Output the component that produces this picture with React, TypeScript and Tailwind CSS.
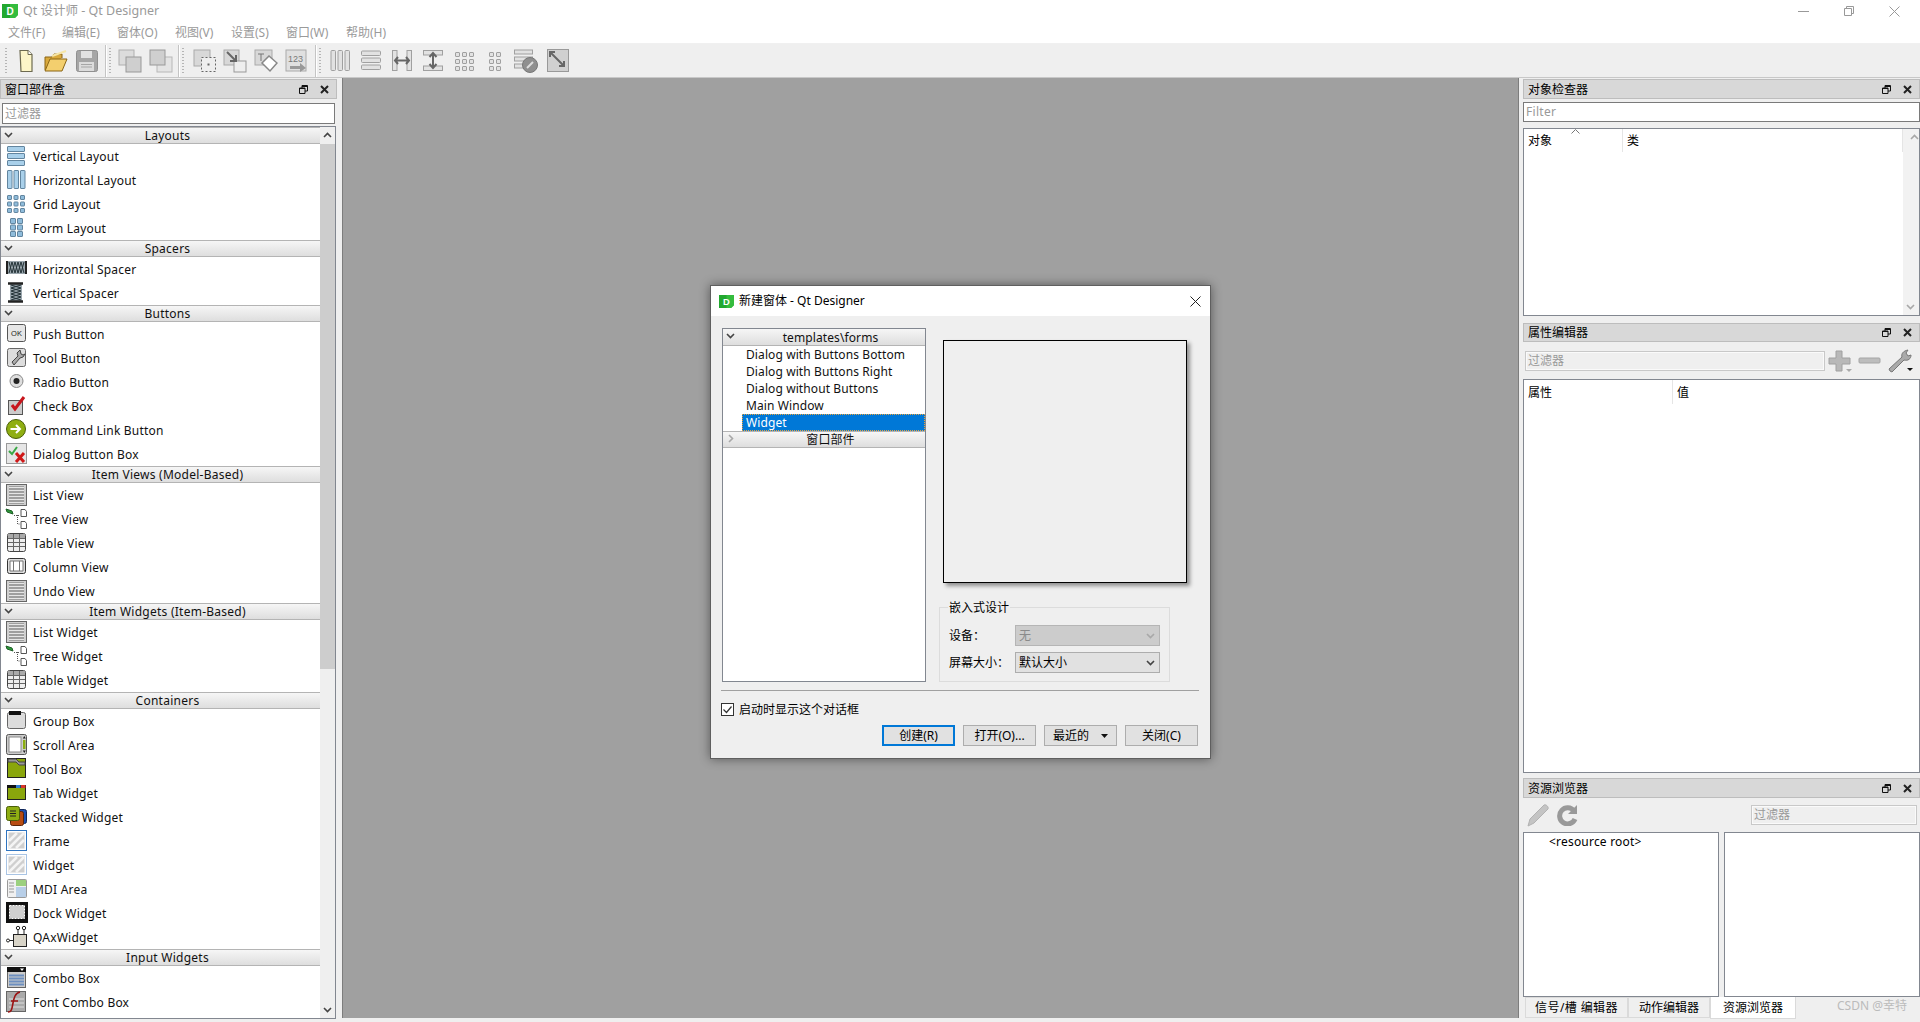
import type { ReactNode } from "react";

const Chevron = ({ open = true, light = false }: { open?: boolean; light?: boolean }) => (
    <svg width="9" height="9" viewBox="0 0 9 9" fill="none" stroke={light ? "#a8a8a8" : "#444"} strokeWidth="1.6">
        <path d={open ? "M1 3l3.5 3.5L8 3" : "M3 1l3.5 3.5L3 8"} />
    </svg>
);

const Box = ({ x, y, w, h, f = "#ddd", s = "#777", r = 0.5 }: { x: number; y: number; w: number; h: number; f?: string; s?: string; r?: number }) => (
    <rect x={x + 0.5} y={y + 0.5} width={w} height={h} rx={r} fill={f} stroke={s} />
);

const squares = (cols: number[], rows: number[], f: string, s: string, size = 4) =>
    cols.flatMap((x) => rows.map((y) => <Box key={`${x}-${y}`} x={x} y={y} w={size} h={size} f={f} s={s} />));

const listLines = (
    <>
        <rect x="1.500" y="1.500" width="20" height="21" fill="#cfcfcf" stroke="#666" />
        <rect x="4" y="3" width="15" height="18" fill="#9f9f9f" />
        {[4, 7, 10, 13, 16, 19].map((y) => <path key={y} d={`M4 ${y + 0.5}h15`} stroke="#e6e6e6" />)}
    </>
);

const treeIcon = (
    <>
        <path d="M1 2l6 2 1 3-6-2z" fill="#2f9a3b" stroke="#1f5f28" />
        <path d="M9 8.500h6M12.500 8v9h3" stroke="#555" strokeDasharray="1 1" fill="none" />
        <path d="M16 2.500h4l1.500 2v5h-5.500zM16 14.500h4l1.500 2v5h-5.500z" fill="#fff" stroke="#555" />
    </>
);

const tableIcon = (
    <>
        <rect x="2.500" y="2.500" width="18" height="18" rx="2" fill="#eee" stroke="#444" />
        <rect x="3" y="3" width="17" height="4" fill="#aaa" />
        <path d="M3 7.500h17M3 11.500h17M3 15.500h17M8.500 3v17M14.500 3v17" stroke="#666" />
    </>
);

const hatch = (border: string) => (
    <>
        <rect x="1.500" y="1.500" width="20" height="20" fill="#fff" stroke={border} />
        <rect x="3.500" y="3.500" width="16" height="16" fill="#cfcfcf" />
        <path d="M4 12l8-8M4 19l15-15M11 19l8-8" stroke="#f4f4f4" strokeWidth="2.500" />
    </>
);

const widgetIcons: Record<string, ReactNode> = {
    "Vertical Layout": [2, 9, 16].map((y) => <Box key={y} x={2} y={y} w={17} h={5} f="#a9d0ea" s="#62859f" />),
    "Horizontal Layout": [2, 8.5, 15].map((x) => <Box key={x} x={x} y={2} w={4.500} h={18} f="#a9d0ea" s="#62859f" />),
    "Grid Layout": squares([2, 8.500, 15], [3, 9.500, 16], "#8fbcdb", "#62859f"),
    "Form Layout": squares([5, 12], [2, 8.500, 15], "#8fbcdb", "#62859f", 5),
    "Horizontal Spacer": (
        <>
            <rect x="2" y="4" width="19" height="13" fill="#9aa6ad" />
            <path d="M2 4v13M21 4v13" stroke="#222" strokeWidth="2" />
            <path d="M4 16l3-11 3 11 3-11 3 11 3-11M4 5l3 11 3-11 3 11 3-11 3 11" stroke="#243338" fill="none" />
        </>
    ),
    "Vertical Spacer": (
        <>
            <rect x="5" y="2" width="12" height="19" fill="#9aa6ad" />
            <path d="M3 2.500h15M3 20.500h15" stroke="#222" strokeWidth="2.500" />
            <path d="M6 4l10 3-10 3 10 3-10 3 10 3M16 4L6 7l10 3-10 3 10 3-10 3" stroke="#243338" fill="none" />
        </>
    ),
    "Push Button": (
        <>
            <rect x="2.500" y="2.500" width="18" height="17" rx="2" fill="#e6e6e6" stroke="#555" />
            <text x="11.500" y="14" textAnchor="middle" fontSize="7.500" fontFamily="Liberation Sans" fill="#222">OK</text>
        </>
    ),
    "Tool Button": (
        <>
            <rect x="2.500" y="2.500" width="18" height="18" rx="2" fill="#ddd" stroke="#666" />
            <path d="M15 4l-3 3 1 3-6 6 2 3 6-7 3-1 2-3-2 1-2-1z" fill="#aaa" stroke="#444" />
        </>
    ),
    "Radio Button": (
        <>
            <circle cx="11.500" cy="11" r="6.500" fill="#dedede" stroke="#888" />
            <circle cx="11.500" cy="11" r="3" fill="#222" />
        </>
    ),
    "Check Box": (
        <>
            <rect x="3.500" y="6.500" width="14" height="14" fill="#ccc" stroke="#555" />
            <path d="M7 11l3 4 9-12" fill="none" stroke="#c8161d" strokeWidth="3" />
        </>
    ),
    "Command Link Button": (
        <>
            <circle cx="11" cy="11" r="9.500" fill="#8fae12" stroke="#4a5f08" />
            <path d="M5.500 11h9M11 7l4 4-4 4" fill="none" stroke="#fff" strokeWidth="2" />
        </>
    ),
    "Dialog Button Box": (
        <>
            <rect x="1.500" y="1.500" width="20" height="20" fill="#e6e6e6" stroke="#999" />
            <path d="M4 9l3 3 5-7" fill="none" stroke="#39a845" strokeWidth="2" />
            <path d="M11 11l8 9M19 11l-8 9" stroke="#d01818" strokeWidth="3" />
        </>
    ),
    "List View": listLines,
    "Tree View": treeIcon,
    "Table View": tableIcon,
    "Column View": (
        <>
            <rect x="2.500" y="3.500" width="18" height="15" rx="2" fill="#ddd" stroke="#333" />
            <path d="M8.500 6v10M14.500 6v10M5 6h13v10H5z" fill="#fff" stroke="#777" />
        </>
    ),
    "Undo View": listLines,
    "List Widget": listLines,
    "Tree Widget": treeIcon,
    "Table Widget": tableIcon,
    "Group Box": (
        <>
            <rect x="2.500" y="3.500" width="18" height="16" rx="2" fill="#dcdcdc" stroke="#666" />
            <rect x="4" y="2" width="12" height="4" fill="#111" />
        </>
    ),
    "Scroll Area": (
        <>
            <rect x="1.500" y="1.500" width="20" height="20" rx="2" fill="#ccc" stroke="#555" />
            <rect x="4" y="4" width="12" height="15" fill="#fff" stroke="#888" />
            <rect x="18" y="7" width="2.500" height="9" fill="#8bad10" />
            <path d="M19.300 3l-1.500 2.500h3zM19.300 20l-1.500-2.500h3z" fill="#222" />
        </>
    ),
    "Tool Box": (
        <>
            <rect x="2.500" y="1.500" width="18" height="19" fill="#8aa60c" stroke="#222" />
            <path d="M3 2h8l3 3h6v3H14l-3-3H3z" fill="#999" stroke="#444" />
        </>
    ),
    "Tab Widget": (
        <>
            <rect x="2.500" y="4.500" width="18" height="14" fill="#8aa60c" stroke="#222" />
            <rect x="2" y="4" width="19" height="3" fill="#111" />
            <rect x="11" y="4" width="4.500" height="3" fill="#2f7fd1" />
            <rect x="16" y="4" width="4.500" height="3" fill="#d9352a" />
        </>
    ),
    "Stacked Widget": (
        <>
            <rect x="9.500" y="4.500" width="12" height="14" rx="2" fill="#1d4fb0" stroke="#10265a" />
            <rect x="5.500" y="6.500" width="13" height="14" rx="2" fill="#b84c12" stroke="#5c2408" />
            <rect x="1.500" y="1.500" width="13" height="14" rx="2" fill="#8fae12" stroke="#4a5f08" />
            <path d="M5 6h6M5 8.500h6M5 11h6" stroke="#222" />
        </>
    ),
    Frame: hatch("#2f74c0"),
    Widget: hatch("#a9c4e4"),
    "MDI Area": (
        <>
            <rect x="2.500" y="2.500" width="19" height="18" rx="1" fill="#f0f0f0" stroke="#999" />
            <rect x="11" y="3" width="10" height="6" fill="#9bd07e" />
            <rect x="11" y="10" width="10" height="10" fill="#b8cfe8" />
            <path d="M4 6h5M4 9h5M4 12h5M4 15h5" stroke="#999" />
        </>
    ),
    "Dock Widget": (
        <>
            <rect x="1" y="1" width="22" height="21" fill="#111" />
            <rect x="4.500" y="4.500" width="15" height="13" fill="#d0d0d0" stroke="#fff" strokeDasharray="2 1" />
        </>
    ),
    QAxWidget: (
        <>
            <rect x="8.500" y="9.500" width="13" height="12" fill="#d8d4c8" stroke="#222" />
            <circle cx="13" cy="3" r="1.700" fill="#fff" stroke="#222" />
            <circle cx="19" cy="3" r="1.700" fill="#fff" stroke="#222" />
            <path d="M13 5v5M19 5v5M4 15.500h4" stroke="#222" />
            <circle cx="3" cy="15.500" r="1.500" fill="#fff" stroke="#222" />
        </>
    ),
    "Combo Box": (
        <>
            <rect x="2.500" y="1.500" width="18" height="20" fill="#ccc" stroke="#666" />
            <rect x="2" y="1" width="19" height="5" fill="#111" />
            <path d="M15 2.500h4l-2 2.500z" fill="#fff" />
            <path d="M4 9.500h15M4 12.500h15M4 15.500h15M4 18.500h15" stroke="#6d8fc0" strokeWidth="2" />
        </>
    ),
    "Font Combo Box": (
        <>
            <rect x="1.500" y="1.500" width="19" height="20" fill="#aaa" stroke="#666" />
            <path d="M4 9h15M4 13h15M4 17h15" stroke="#ddd" />
            <path d="M3 22c4 0 4-4 5-9s2-10 7-11M6 11h7" fill="none" stroke="#9c1212" strokeWidth="1.600" />
        </>
    ),
};

const sections = [
    { title: "Layouts", items: ["Vertical Layout", "Horizontal Layout", "Grid Layout", "Form Layout"] },
    { title: "Spacers", items: ["Horizontal Spacer", "Vertical Spacer"] },
    { title: "Buttons", items: ["Push Button", "Tool Button", "Radio Button", "Check Box", "Command Link Button", "Dialog Button Box"] },
    { title: "Item Views (Model-Based)", items: ["List View", "Tree View", "Table View", "Column View", "Undo View"] },
    { title: "Item Widgets (Item-Based)", items: ["List Widget", "Tree Widget", "Table Widget"] },
    {
        title: "Containers",
        items: ["Group Box", "Scroll Area", "Tool Box", "Tab Widget", "Stacked Widget", "Frame", "Widget", "MDI Area", "Dock Widget", "QAxWidget"],
    },
    { title: "Input Widgets", items: ["Combo Box", "Font Combo Box"] },
];

const menus = [
    { label: "文件(F)", width: "w-[54px]" },
    { label: "编辑(E)", width: "w-[55px]" },
    { label: "窗体(O)", width: "w-[58px]" },
    { label: "视图(V)", width: "w-[56px]" },
    { label: "设置(S)", width: "w-[55px]" },
    { label: "窗口(W)", width: "w-[60px]" },
    { label: "帮助(H)", width: "w-[50px]" },
];

const LogoD = ({ size }: { size: number }) => (
    <svg width={size} height={size} viewBox="0 0 16 16">
        <path d="M0 1h16v11l-3 3H0z" fill="#22a82f" />
        <path d="M8 1h8v11l-3 3H8z" fill="#41c94a" opacity="0.6" />
        <text x="8" y="12" textAnchor="middle" fontSize="10" fontWeight="700" fontFamily="Liberation Sans" fill="#fff">D</text>
    </svg>
);

const Grip = () => (
    <div className="mr-[3px] h-[26px] w-[2px] bg-[repeating-linear-gradient(to_bottom,#b5b5b5_0,#b5b5b5_1px,transparent_1px,transparent_3px)]" />
);

const ToolSep = () => <div className="mx-[3px] h-[32px] w-px bg-[#c4c4c4] shadow-[1px_0_0_#fff]" />;

const ToolIcon = ({ children, w = 24, className = "" }: { children: ReactNode; w?: number; className?: string }) => (
    <svg width={w} height="24" viewBox={`0 0 ${w} 24`} className={className}>
        {children}
    </svg>
);

const Toolbar = () => (
    <div className="flex h-[34px] items-center border-b border-[#c8c8c8] bg-[#efefef] pl-[5px]">
        <Grip />
        <ToolIcon w={16} className="ml-[8px]">
            <path d="M2 1.500h8l4 4v17H3z" fill="#fdf6c8" stroke="#6d6a50" strokeWidth="1.200" />
            <path d="M10 1.500v4h4" fill="#fff" stroke="#6d6a50" />
        </ToolIcon>
        <ToolIcon className="ml-[10px]">
            <path d="M1 21V8h7l2-3h8v4" fill="#d9a93c" stroke="#8a6514" />
            <path d="M1 22l5-12h17l-5 12z" fill="#f3cf6e" stroke="#8a6514" />
            <path d="M8 7l14-5" stroke="#f6e6a8" strokeWidth="2" />
        </ToolIcon>
        <ToolIcon w={22} className="ml-[8px]">
            <rect x="0.500" y="1.500" width="21" height="21" rx="2" fill="#a6a6a6" stroke="#909090" />
            <rect x="5" y="2" width="11" height="7" fill="#e2e2e2" />
            <rect x="3" y="13" width="15" height="9" fill="#dcdcdc" />
            <path d="M5 15.500h11M5 18h11" stroke="#a6a6a6" />
        </ToolIcon>
        <div className="w-[4px]" />
        <ToolSep />
        <Grip />
        <ToolIcon className="ml-[4px]">
            <rect x="1" y="1" width="15" height="15" fill="#dcdcdc" stroke="#b0b0b0" />
            <rect x="8" y="8" width="15" height="15" fill="#cfcfcf" stroke="#999" />
        </ToolIcon>
        <ToolIcon className="ml-[7px]">
            <rect x="8" y="8" width="15" height="15" fill="#e4e4e4" stroke="#b8b8b8" />
            <rect x="1" y="1" width="15" height="15" fill="#cfcfcf" stroke="#999" />
        </ToolIcon>
        <div className="w-[2px]" />
        <ToolSep />
        <Grip />
        <ToolIcon className="ml-[6px]">
            <rect x="1" y="1" width="16" height="16" fill="#d8d8d8" stroke="#aaa" />
            <rect x="8.500" y="8.500" width="14" height="14" fill="#eee" stroke="#666" strokeDasharray="2 2" />
            <rect x="14.500" y="14.500" width="2" height="2" fill="#666" />
        </ToolIcon>
        <ToolIcon className="ml-[6px]">
            <rect x="1" y="1" width="15" height="15" fill="#d8d8d8" stroke="#aaa" />
            <rect x="11" y="12" width="12" height="11" fill="#eee" stroke="#999" />
            <path d="M4 3l8 8M13 6v6H7" stroke="#666" strokeWidth="2" fill="none" />
        </ToolIcon>
        <ToolIcon className="ml-[7px]">
            <rect x="1" y="1" width="17" height="15" fill="#d8d8d8" stroke="#aaa" />
            <path d="M8 14l7-7 8 7-7 8z" fill="#fff" stroke="#888" strokeWidth="1.500" />
            <path d="M4 5h6M7 5v7" stroke="#777" />
        </ToolIcon>
        <ToolIcon className="ml-[7px]">
            <rect x="1" y="1" width="20" height="21" fill="#e0e0e0" stroke="#aaa" />
            <text x="3" y="13" fontSize="9" fontFamily="Liberation Sans" fill="#777">123</text>
            <path d="M5 17h10v-3l6 5-6 4v-3H5z" fill="#999" />
        </ToolIcon>
        <div className="w-[3px]" />
        <ToolSep />
        <Grip />
        <ToolIcon w={20} className="ml-[6px]">
            {[1, 8, 15].map((x) => <rect key={x} x={x} y="1.500" width="4.500" height="20" rx="1" fill="#e2e2e2" stroke="#a0a0a0" />)}
        </ToolIcon>
        <ToolIcon w={20} className="ml-[11px]">
            {[2, 9, 16].map((y) => <rect key={y} x="0.500" y={y} width="19" height="4.500" rx="1" fill="#e2e2e2" stroke="#a0a0a0" />)}
        </ToolIcon>
        <ToolIcon w={20} className="ml-[11px]">
            <rect x="0.500" y="1.500" width="4.500" height="20" fill="#e2e2e2" stroke="#a0a0a0" />
            <rect x="15" y="1.500" width="4.500" height="20" fill="#e2e2e2" stroke="#a0a0a0" />
            <path d="M3 11.500h14M6 8l-3 3.500L6 15M14 8l3 3.500L14 15" stroke="#666" strokeWidth="2" fill="none" />
        </ToolIcon>
        <ToolIcon w={20} className="ml-[11px]">
            <rect x="0.500" y="1.500" width="19" height="4.500" fill="#e2e2e2" stroke="#a0a0a0" />
            <rect x="0.500" y="17" width="19" height="4.500" fill="#e2e2e2" stroke="#a0a0a0" />
            <path d="M10 4v15M6.500 8L10 4l3.500 4M6.500 15l3.500 4 3.500-4" stroke="#666" strokeWidth="2" fill="none" />
        </ToolIcon>
        <ToolIcon w={20} className="ml-[11px]">
            {squares([1, 8, 15], [3, 10, 17], "#e2e2e2", "#a0a0a0")}
        </ToolIcon>
        <ToolIcon w={14} className="ml-[14px]">
            {squares([1, 8], [3, 10, 17], "#e2e2e2", "#a0a0a0")}
        </ToolIcon>
        <ToolIcon className="ml-[12px]">
            {[1, 8, 15].map((y) => <rect key={y} x="0.500" y={y} width="18" height="4" fill="#e2e2e2" stroke="#a0a0a0" />)}
            <circle cx="16" cy="16" r="7.500" fill="#8f8f8f" stroke="#777" />
            <path d="M13 19l6-6" stroke="#ddd" strokeWidth="2" />
        </ToolIcon>
        <ToolIcon w={22} className="ml-[9px]">
            <rect x="0.500" y="0.500" width="21" height="22" fill="#d0d0d0" stroke="#999" />
            <path d="M3 3l14 14M3 8V3h5M17 12v5h-5" stroke="#666" strokeWidth="2" fill="none" />
        </ToolIcon>
    </div>
);

const FloatClose = () => (
    <div className="flex items-center">
        <svg width="9" height="9" viewBox="0 0 9 9" fill="none" stroke="#111">
            <path d="M0.500 3h5.500v5.500H0.500zM3 3V0.500h5.500V6H6" />
            <path d="M0.500 3.500h5.500M3 1.500h5.500" />
        </svg>
        <svg width="9" height="9" viewBox="0 0 9 9" stroke="#222" strokeWidth="2" className="ml-[12px]">
            <path d="M1 1l7 7M8 1l-7 7" />
        </svg>
    </div>
);

const DockTitle = ({ title, height }: { title: string; height: string }) => (
    <div className={`flex shrink-0 items-center justify-between border border-[#bdbdbd] bg-[#d8d8d8] pr-[7px] pl-[4px] text-black ${height}`}>
        <span className="pt-px">{title}</span>
        <FloatClose />
    </div>
);

const WidgetBox = () => (
    <div className="flex w-[340px] shrink-0 flex-col pt-px">
        <div className="w-[337px]">
            <DockTitle title="窗口部件盒" height="h-[20px]" />
        </div>
        <div className="mt-[4px] ml-[2px] flex h-[21px] w-[333px] items-center border border-[#7a7a7a] bg-white pl-[2px] text-[#999]">过滤器</div>
        <div className="mt-[2px] flex h-[893px] w-[336px] overflow-hidden border border-[#828790] bg-white">
            <div className="w-[319px] shrink-0">
                {sections.map((section) => (
                    <div key={section.title}>
                        <div className="relative flex h-[17px] items-center justify-center border-y border-[#b4b4b4] bg-gradient-to-b from-[#f6f6f6] to-[#dedede] pl-[14px] leading-none tracking-[0.25px] text-[#111]">
                            <span className="absolute top-[2px] left-[3px]"><Chevron /></span>
                            {section.title}
                        </div>
                        {section.items.map((item) => (
                            <div key={item} className="flex h-[24px] items-center text-[#111]">
                                <svg width="24" height="24" viewBox="0 0 24 24" className="ml-[4px] shrink-0">
                                    {widgetIcons[item]}
                                </svg>
                                <span className="ml-[4px] pt-[2px] tracking-[0.2px]">{item}</span>
                            </div>
                        ))}
                    </div>
                ))}
            </div>
            <div className="flex flex-1 flex-col bg-[#efefef]">
                <div className="flex h-[17px] items-center justify-center"><span className="rotate-180"><Chevron /></span></div>
                <div className="h-[525px] bg-[#cdcdcd]" />
                <div className="flex-1" />
                <div className="flex h-[17px] items-center justify-center"><Chevron /></div>
            </div>
        </div>
    </div>
);

const ObjectInspector = () => (
    <>
        <DockTitle title="对象检查器" height="h-[20px]" />
        <div className="mt-[3px] flex h-[20px] items-center border border-[#7a7a7a] bg-white pl-[2px] tracking-[0.3px] text-[#999]">Filter</div>
        <div className="mt-[6px] flex h-[188px] border border-[#828790] bg-white">
            <div className="flex h-[23px] flex-1 text-black">
                <div className="relative w-[99px] border-r border-[#e5e5e5] pt-[4px] pl-[4px]">
                    对象
                    <svg width="9" height="5" viewBox="0 0 9 5" fill="none" stroke="#777" className="absolute top-0 left-[47px]"><path d="M0.500 4.500L4.500 0.500l4 4" /></svg>
                </div>
                <div className="flex-1 border-r border-[#e5e5e5] pt-[4px] pl-[4px]">类</div>
            </div>
            <div className="flex w-[16px] flex-col justify-between bg-[#f2f2f2] py-[4px] pl-[3px]">
                <span className="rotate-180"><Chevron light /></span>
                <Chevron light />
            </div>
        </div>
    </>
);

const PropertyEditor = () => (
    <>
        <div className="mt-[7px]"><DockTitle title="属性编辑器" height="h-[19px]" /></div>
        <div className="mt-[9px] flex h-[20px] items-center">
            <div className="ml-[2px] flex h-[20px] w-[300px] items-center border border-[#c8c8c8] pl-[2px] text-[#999] shadow-[inset_0_0_0_1px_#fafafa]">过滤器</div>
            <svg width="24" height="24" viewBox="0 0 24 24" className="ml-[3px]">
                <path d="M8 2h6v7h8v6h-8v7H8v-7H1V9h7z" fill="#b8b8b8" stroke="#a0a0a0" />
                <path d="M18 20h6l-3 3z" fill="#aaa" />
            </svg>
            <svg width="24" height="24" viewBox="0 0 24 24" className="ml-[6px]"><rect x="1" y="9" width="21" height="5" rx="1" fill="#bdbdbd" stroke="#a5a5a5" /></svg>
            <svg width="26" height="24" viewBox="0 0 26 24" className="ml-[6px]">
                <path d="M2 22l-1-2L14 8c-1-3 1-6 6-7l-2 3 2 3 3-1c0 4-3 6-7 5L4 23z" fill="#aaa" stroke="#777" />
                <path d="M19 19h6l-3 3z" fill="#111" />
            </svg>
        </div>
        <div className="mt-[8px] h-[394px] border border-[#828790] bg-white">
            <div className="flex h-[24px] text-black">
                <div className="w-[149px] border-r border-[#e5e5e5] pt-[5px] pl-[4px]">属性</div>
                <div className="flex-1 pt-[5px] pl-[4px]">值</div>
            </div>
        </div>
    </>
);

const tabs = [
    { label: "信号/槽 编辑器", className: "w-[103px] ml-[2px] border border-[#dadada] tracking-[0.4px]" },
    { label: "动作编辑器", className: "w-[82px] border border-[#dadada]" },
    { label: "资源浏览器", className: "w-[86px] h-[22px] bg-white border border-[#dadada] border-t-0" },
];

const ResourceBrowser = () => (
    <>
        <div className="mt-[5px]"><DockTitle title="资源浏览器" height="h-[20px]" /></div>
        <div className="flex h-[34px] items-center">
            <svg width="24" height="24" viewBox="0 0 24 24" className="ml-[4px]">
                <path d="M1 23l2-7L17 2c2-1 5 2 4 4L7 20z" fill="#c4c4c4" stroke="#b2b2b2" />
            </svg>
            <svg width="22" height="22" viewBox="0 0 22 22" className="ml-[6px]" fill="none">
                <path d="M17 7a8 8 0 1 0 1 8" stroke="#999" strokeWidth="5" />
                <path d="M20 1v9h-9z" fill="#999" />
            </svg>
            <div className="ml-[172px] flex h-[20px] w-[166px] items-center border border-[#c8c8c8] pl-[2px] text-[#999] shadow-[inset_0_0_0_1px_#fafafa]">过滤器</div>
        </div>
        <div className="flex h-[165px] justify-between">
            <div className="w-[196px] border border-[#828790] bg-white pt-[1px] pl-[25px] tracking-[0.2px] text-black">&lt;resource root&gt;</div>
            <div className="w-[196px] border border-[#828790] bg-white" />
        </div>
        <div className="flex items-start">
            {tabs.map((tab) => (
                <div key={tab.label} className={`flex h-[21px] items-center justify-center text-black ${tab.className}`}>{tab.label}</div>
            ))}
            <div className="mt-[1px] ml-[41px] text-[#bbbbbb]">CSDN @幸特</div>
        </div>
    </>
);

const DialogButton = ({ label, primary, children }: { label: string; primary?: boolean; children?: ReactNode }) => (
    <div className={`flex h-[21px] w-[73px] items-center justify-center bg-[#e1e1e1] text-black ${primary ? "border-2 border-[#0078d7]" : "border border-[#adadad]"}`}>
        {label}
        {children}
    </div>
);

const NewFormDialog = () => (
    <div className="absolute top-[285px] left-[710px] flex h-[474px] w-[501px] flex-col border border-[#5f5f5f] bg-[#efefef] shadow-[0_0_10px_rgba(0,0,0,0.45)]">
        <div className="flex h-[30px] shrink-0 items-center bg-white pr-[9px] pl-[8px] text-black">
            <LogoD size={15} />
            <span className="ml-[5px]">新建窗体 - Qt Designer</span>
            <svg width="11" height="11" viewBox="0 0 11 11" stroke="#222" className="ml-auto"><path d="M0.500 0.500l10 10M10.500 0.500l-10 10" /></svg>
        </div>
        <div className="flex pt-[12px] pl-[11px]">
            <div className="h-[354px] w-[204px] border border-[#828790] bg-white tracking-[0.1px] text-[#111]">
                <div className="relative flex h-[17px] items-center justify-center border-b border-[#b4b4b4] bg-gradient-to-b from-[#f6f6f6] to-[#dedede] pt-px pl-[13px]">
                    <span className="absolute top-[2px] left-[3px]"><Chevron /></span>
                    templates\forms
                </div>
                {["Dialog with Buttons Bottom", "Dialog with Buttons Right", "Dialog without Buttons", "Main Window"].map((name) => (
                    <div key={name} className="flex h-[17px] items-center pl-[23px]">{name}</div>
                ))}
                <div className="ml-[19px] flex h-[17px] items-center bg-[#0078d7] pl-[4px] text-white outline-1 -outline-offset-1 outline-dotted outline-[#e8a33d]">Widget</div>
                <div className="relative flex h-[17px] items-center justify-center border-y border-[#b4b4b4] bg-gradient-to-b from-[#f6f6f6] to-[#dedede] pl-[13px]">
                    <span className="absolute top-[2px] left-[3px]"><Chevron open={false} light /></span>
                    窗口部件
                </div>
            </div>
            <div className="ml-[13px] flex flex-col pt-[12px]">
                <div className="ml-[4px] h-[243px] w-[244px] border border-black bg-[#efefef] shadow-[3px_3px_4px_rgba(0,0,0,0.4)]" />
                <div className="mt-[24px] h-[75px] w-[231px] border border-[#dcdcdc] text-black">
                    <div className="-mt-[7px] ml-[8px] w-fit bg-[#efefef] px-px leading-[14px]">嵌入式设计</div>
                    <div className="mt-[10px] flex h-[21px] items-center pl-[9px]">
                        <span className="w-[66px]">设备：</span>
                        <div className="flex h-[21px] w-[145px] items-center justify-between border border-[#b5b5b5] bg-[#cccccc] pr-[4px] pl-[3px] text-[#8a8a8a]">无<Chevron light /></div>
                    </div>
                    <div className="mt-[6px] flex h-[21px] items-center pl-[9px]">
                        <span className="w-[66px]">屏幕大小：</span>
                        <div className="flex h-[21px] w-[145px] items-center justify-between border border-[#adadad] bg-[#e1e1e1] pr-[4px] pl-[3px]">默认大小<Chevron /></div>
                    </div>
                </div>
            </div>
        </div>
        <div className="mt-[8px] mr-[11px] ml-[10px] h-px bg-[#a0a0a0]" />
        <div className="mt-[12px] flex h-[13px] items-center pl-[10px] text-black">
            <svg width="13" height="13" viewBox="0 0 13 13" className="shrink-0">
                <rect x="0.500" y="0.500" width="12" height="12" fill="#fff" stroke="#333" />
                <path d="M2.500 6.500l3 3 5-6" fill="none" stroke="#333" strokeWidth="1.200" />
            </svg>
            <span className="ml-[5px]">启动时显示这个对话框</span>
        </div>
        <div className="mt-[9px] flex justify-end gap-[8px] pr-[12px]">
            <DialogButton label="创建(R)" primary />
            <DialogButton label="打开(O)..." />
            <DialogButton label="最近的">
                <svg width="7" height="4" viewBox="0 0 7 4" className="ml-[12px]"><path d="M0 0h7L3.500 4z" fill="#111" /></svg>
            </DialogButton>
            <DialogButton label="关闭(C)" />
        </div>
    </div>
);

export default function App() {
    return (
        <div className="relative flex h-[1022px] w-[1920px] flex-col overflow-hidden bg-[#efefef] font-['Noto_Sans','Noto_Sans_CJK_SC',sans-serif] text-[12px] leading-[16px]">
            {/* title bar */}
            <div className="flex h-[22px] items-center bg-white pl-[2px] text-[12.5px] text-[#9a9a9a]">
                <LogoD size={16} />
                <span className="ml-[5px]">Qt 设计师 - Qt Designer</span>
                <div className="ml-auto flex items-center pr-[20px]">
                    <svg width="11" height="11" viewBox="0 0 11 11" stroke="#999"><path d="M0 5.500h11" /></svg>
                    <svg width="10" height="10" viewBox="0 0 10 10" fill="none" stroke="#999" className="ml-[35px]"><path d="M0.500 2.500h7v7h-7zM2.500 2.500v-2h7v7h-2" /></svg>
                    <svg width="11" height="11" viewBox="0 0 11 11" stroke="#999" className="ml-[35px]"><path d="M0.500 0.500l10 10M10.500 0.500l-10 10" /></svg>
                </div>
            </div>
            {/* menu */}
            <div className="flex h-[22px] items-center border-b border-[#f0f0f0] bg-white pl-[8px] text-[#9a9a9a]">
                {menus.map((menu) => (
                    <div key={menu.label} className={menu.width}>{menu.label}</div>
                ))}
            </div>
            <Toolbar />
            <div className="flex min-h-0 flex-1">
                <WidgetBox />
                <div className="mb-[4px] mr-[4px] ml-[2px] flex-1 border-x border-[#7d7d7d] bg-[#a0a0a0]" />
                <div className="flex w-[397px] shrink-0 flex-col pt-px">
                    <ObjectInspector />
                    <PropertyEditor />
                    <ResourceBrowser />
                </div>
            </div>
            <NewFormDialog />
        </div>
    );
}
